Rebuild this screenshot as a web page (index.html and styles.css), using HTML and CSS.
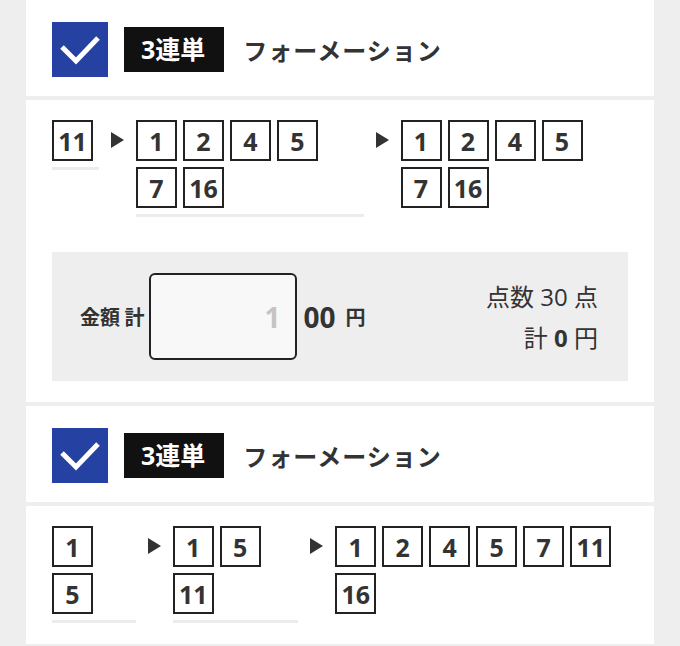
FILE: index.html
```html
<!DOCTYPE html>
<html lang="ja">
<head>
<meta charset="utf-8">
<title>3連単 フォーメーション</title>
<link rel="stylesheet" href="styles.css">
</head>
<body>
<div class="panel">
  <div class="head">
    <span class="check"><svg viewBox="0 0 56 55" width="56" height="55"><polyline points="10,25 24,39 46,16" fill="none" stroke="#fff" stroke-width="5"/></svg></span>
    <span class="tag">3連単</span>
    <span class="kind">フォーメーション</span>
  </div>
  <div class="sep"></div>
  <div class="body">
    <div class="combo">
      <div class="col"><span class="num">11</span></div>
      <span class="arrow"></span>
      <div class="col"><span class="num">1</span><span class="num">2</span><span class="num">4</span><span class="num">5</span><span class="num">7</span><span class="num">16</span></div>
      <span class="arrow"></span>
      <div class="col col-last"><span class="num">1</span><span class="num">2</span><span class="num">4</span><span class="num">5</span><span class="num">7</span><span class="num">16</span></div>
    </div>
    <div class="amount">
      <div class="amount-left">
        <span class="lbl">金額 計</span>
        <span class="input">1</span>
        <span class="zeros">00</span>
        <span class="yen">円</span>
      </div>
      <div class="amount-right">
        <div>点数 30 点</div>
        <div>計 <b>0</b> 円</div>
      </div>
    </div>
  </div>
  <div class="sep"></div>
  <div class="head">
    <span class="check"><svg viewBox="0 0 56 55" width="56" height="55"><polyline points="10,25 24,39 46,16" fill="none" stroke="#fff" stroke-width="5"/></svg></span>
    <span class="tag">3連単</span>
    <span class="kind">フォーメーション</span>
  </div>
  <div class="sep"></div>
  <div class="body">
    <div class="combo">
      <div class="col"><span class="num">1</span><span class="num">5</span></div>
      <span class="arrow"></span>
      <div class="col"><span class="num">1</span><span class="num">5</span><span class="num">11</span></div>
      <span class="arrow"></span>
      <div class="col col-last"><span class="num">1</span><span class="num">2</span><span class="num">4</span><span class="num">5</span><span class="num">7</span><span class="num">11</span><span class="num">16</span></div>
    </div>
  </div>
</div>
</body>
</html>
```
FILE: styles.css
```css
html, body {
  margin: 0;
  padding: 0;
  background: #eeeeee;
}
body {
  font-family: "Open Sans", "Noto Sans CJK JP", sans-serif;
  color: #333;
  height: 646px;
  overflow: hidden;
}
.panel {
  margin: 0 26px;
  background: #fff;
}
.sep {
  height: 4px;
  background: #eeeeee;
}
.head {
  display: flex;
  align-items: center;
  padding: 22px 26px 19px;
}
.check {
  display: block;
  flex: none;
  width: 56px;
  height: 55px;
  background: #2541a2;
}
.check svg {
  display: block;
}
.tag {
  margin-left: 16px;
  height: 45px;
  padding: 0 19px 0 17px;
  background: #111;
  color: #fff;
  font-weight: 700;
  font-size: 25px;
  line-height: 45px;
}
.kind {
  margin-left: 19px;
  font-family: "Noto Sans CJK JP", sans-serif;
  font-weight: 700;
  font-size: 24px;
  letter-spacing: 1px;
  color: #333;
}
.body {
  padding: 20px 26px 21px;
}
.combo {
  display: flex;
  align-items: flex-start;
}
.col {
  display: flex;
  flex-wrap: wrap;
  align-content: flex-start;
  border-bottom: 3px solid #ececec;
}
.col-last {
  border-bottom-color: transparent;
}
.num {
  box-sizing: border-box;
  width: 41px;
  height: 41px;
  margin: 0 6px 6px 0;
  border: 2px solid #222;
  display: flex;
  align-items: center;
  justify-content: center;
  font-weight: 700;
  font-size: 25px;
  color: #333;
}
.arrow {
  flex: none;
  width: 0;
  height: 0;
  margin: 12px 12px 0;
  border-left: 13px solid #333;
  border-top: 8px solid transparent;
  border-bottom: 8px solid transparent;
}
.amount {
  margin-top: 35px;
  height: 129px;
  background: #eeeeee;
  display: flex;
  align-items: center;
  justify-content: space-between;
  padding: 0 30px 0 28px;
}
.amount-left {
  display: flex;
  align-items: center;
}
.lbl {
  font-family: "Noto Sans CJK JP", sans-serif;
  font-weight: 700;
  font-size: 20px;
  margin-right: 4px;
}
.input {
  box-sizing: border-box;
  width: 148px;
  height: 87px;
  border: 2px solid #222;
  border-radius: 6px;
  background: #f8f8f8;
  display: flex;
  align-items: center;
  justify-content: flex-end;
  padding-right: 14px;
  font-weight: 700;
  font-size: 28px;
  color: #c4c4c4;
}
.zeros {
  margin-left: 7px;
  font-weight: 700;
  font-size: 28px;
}
.yen {
  margin-left: 10px;
  font-family: "Noto Sans CJK JP", sans-serif;
  font-weight: 700;
  font-size: 20px;
}
.amount-right {
  text-align: right;
  font-size: 24px;
  line-height: 41px;
  color: #333;
}
.amount-right b {
  font-weight: 700;
}
```
